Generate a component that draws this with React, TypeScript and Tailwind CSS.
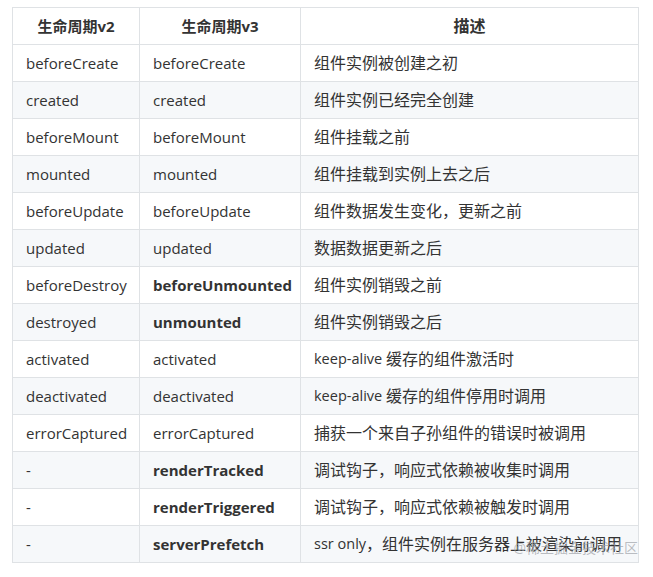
import React from 'react';

type Row = { v2: string; v3: string; desc: string; bold?: boolean };

const rows: Row[] = [
  { v2: 'beforeCreate', v3: 'beforeCreate', desc: '组件实例被创建之初' },
  { v2: 'created', v3: 'created', desc: '组件实例已经完全创建' },
  { v2: 'beforeMount', v3: 'beforeMount', desc: '组件挂载之前' },
  { v2: 'mounted', v3: 'mounted', desc: '组件挂载到实例上去之后' },
  { v2: 'beforeUpdate', v3: 'beforeUpdate', desc: '组件数据发生变化，更新之前' },
  { v2: 'updated', v3: 'updated', desc: '数据数据更新之后' },
  { v2: 'beforeDestroy', v3: 'beforeUnmounted', desc: '组件实例销毁之前', bold: true },
  { v2: 'destroyed', v3: 'unmounted', desc: '组件实例销毁之后', bold: true },
  { v2: 'activated', v3: 'activated', desc: 'keep-alive 缓存的组件激活时' },
  { v2: 'deactivated', v3: 'deactivated', desc: 'keep-alive 缓存的组件停用时调用' },
  { v2: 'errorCaptured', v3: 'errorCaptured', desc: '捕获一个来自子孙组件的错误时被调用' },
  { v2: '-', v3: 'renderTracked', desc: '调试钩子，响应式依赖被收集时调用', bold: true },
  { v2: '-', v3: 'renderTriggered', desc: '调试钩子，响应式依赖被触发时调用', bold: true },
  { v2: '-', v3: 'serverPrefetch', desc: 'ssr only，组件实例在服务器上被渲染前调用', bold: true },
];

const cell = 'border border-[#dfe2e5] px-[13px] py-[6px] leading-[24px]';

// latin runs a touch smaller, CJK runs a bit larger like the source page
function Desc({ text }: { text: string }) {
  const parts = text.match(/[\x20-\x7e]+|[^\x20-\x7e]+/g) || [];
  return (
    <div className="h-[24px] leading-[24px] whitespace-nowrap">
      {parts.map((p, i) =>
        /^[\x20-\x7e]+$/.test(p) ? (
          <span key={i} className="text-[14.5px] whitespace-pre align-top leading-[24px]">{p}</span>
        ) : (
          <span key={i} className="text-[16px] align-top leading-[24px]">{p}</span>
        )
      )}
    </div>
  );
}

export default function App() {
  return (
    <div className="w-[653px] h-[577px] bg-white pt-[7px] pl-[12px] text-[15px] text-[#333] font-['Open_Sans','Noto_Sans_CJK_SC',sans-serif]">
      <div className="relative w-[626px]">
        <table className="table-fixed border-collapse w-[626px]">
          <colgroup>
            <col className="w-[127px]" />
            <col className="w-[161px]" />
            <col className="w-[338px]" />
          </colgroup>
          <thead>
            <tr className="bg-white">
              <th className={`${cell} font-bold text-center`}>生命周期v2</th>
              <th className={`${cell} font-bold text-center`}>生命周期v3</th>
              <th className={`${cell} font-bold text-center text-[16px]`}>描述</th>
            </tr>
          </thead>
          <tbody>
            {rows.map((r, i) => (
              <tr key={r.v3} className={i % 2 === 1 ? 'bg-[#f6f8fa]' : 'bg-white'}>
                <td className={`${cell} whitespace-nowrap`}>{r.v2}</td>
                <td className={`${cell} whitespace-nowrap ${r.bold ? 'font-bold' : ''}`}>{r.v3}</td>
                <td className={cell}>
                  <Desc text={r.desc} />
                </td>
              </tr>
            ))}
          </tbody>
        </table>
        <span className="absolute right-[0px] bottom-[8px] text-[14px] leading-none text-[#9ea2a8]/70 pointer-events-none whitespace-nowrap">
          @稀土掘金技术社区
        </span>
      </div>
    </div>
  );
}
